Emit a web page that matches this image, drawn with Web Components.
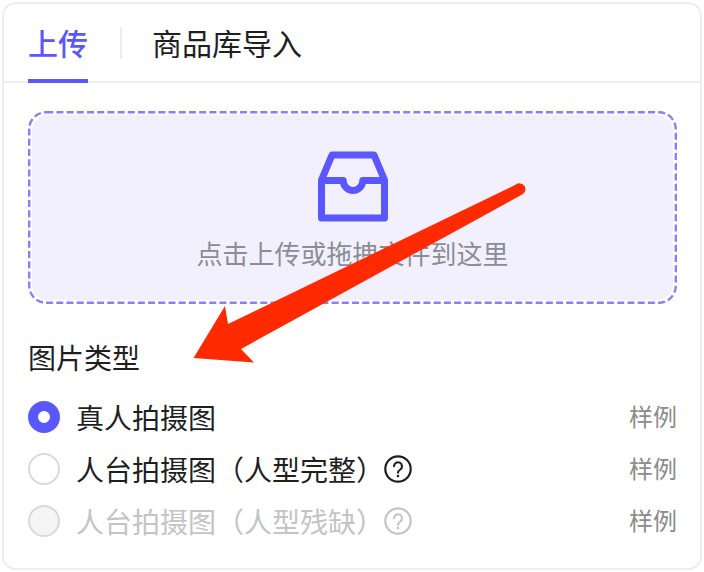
<!DOCTYPE html>
<html lang="zh">
<head>
<meta charset="utf-8">
<style>
  html, body { margin: 0; background: #fff; }
  body { font-family: "Noto Sans CJK SC", "Noto Sans", sans-serif; color: #1f1f1f; }
</style>
</head>
<body>
<upload-card>
  <tab-bar></tab-bar>
  <drop-zone>点击上传或拖拽文件到这里</drop-zone>
  <div slot="label">图片类型</div>
  <type-option checked>真人拍摄图</type-option>
  <type-option help>人台拍摄图（人型完整）</type-option>
  <type-option help disabled>人台拍摄图（人型残缺）</type-option>
</upload-card>
<red-arrow></red-arrow>

<script>
const helpIcon = `
<svg width="28" height="28" viewBox="0 0 28 28" fill="none" stroke="currentColor">
  <circle cx="14" cy="14" r="12.7" stroke-width="2.2"/>
  <path d="M10 11.2a4 4 0 1 1 6.3 3.3c-1.4 1-2.3 1.700-2.300 3.300" stroke-width="2.100" stroke-linecap="round"/>
  <circle cx="14" cy="21" r="1.300" fill="currentColor" stroke="none"/>
</svg>`;

class UploadCard extends HTMLElement {
  constructor() {
    super();
    this.attachShadow({ mode: "open" }).innerHTML = `
    <style>
      :host {
        display: block;
        box-sizing: border-box;
        width: 700px;
        height: 568px;
        margin: 2px;
        border: 2px solid #eeeeee;
        border-radius: 14px;
      }
      .body { padding: 28px 23px 0 24px; }
      ::slotted([slot="label"]) {
        font-size: 28px;
        line-height: 36px;
        margin: 35px 0 16px;
      }
    </style>
    <slot name="tabs"></slot>
    <div class="body">
      <slot name="zone"></slot>
      <slot name="label"></slot>
      <slot></slot>
    </div>`;
    this.querySelector("tab-bar").slot = "tabs";
    this.querySelector("drop-zone").slot = "zone";
  }
}

class TabBar extends HTMLElement {
  constructor() {
    super();
    this.attachShadow({ mode: "open" }).innerHTML = `
    <style>
      :host {
        display: flex;
        align-items: center;
        box-sizing: border-box;
        height: 79px;
        padding-left: 24px;
        border-bottom: 2px solid #eeeeee;
        font-size: 30px;
      }
      .tab { position: relative; line-height: 77px; }
      .active { color: #5b57ff; font-weight: 500; }
      .active::after {
        content: "";
        position: absolute;
        left: 0; right: 0; bottom: -2px;
        height: 4px;
        background: #5b57ff;
      }
      .sep { width: 2px; height: 32px; margin: 0 30px 0 32px; background: #eeeeee; }
    </style>
    <div class="tab active">上传</div>
    <div class="sep"></div>
    <div class="tab">商品库导入</div>`;
  }
}

class DropZone extends HTMLElement {
  constructor() {
    super();
    this.attachShadow({ mode: "open" }).innerHTML = `
    <style>
      :host {
        display: flex;
        position: relative;
        box-sizing: border-box;
        height: 193px;
        padding: 4px;
        color: #8c8c94;
        font-size: 26px;
      }
      .fill {
        flex: 1;
        display: flex;
        flex-direction: column;
        align-items: center;
        border-radius: 16px;
        background: #f2f0ff;
      }
      .dash { position: absolute; left: 0; top: 0; }
      .icon { margin-top: 36px; display: block; color: #5b57ff; }
      .text { margin-top: 12px; line-height: 36px; }
    </style>
    <div class="fill">
      <svg class="icon" width="70" height="72" viewBox="0 0 70 72" fill="none" stroke="currentColor" stroke-width="7" stroke-linejoin="round">
        <path d="M3.500 29 L14 4 H56 L66.500 29 V67 H3.500 Z"/>
        <path d="M3.500 29.500 H25.200 a9.800 10 0 0 0 19.600 0 H66.500"/>
      </svg>
      <div class="text"><slot></slot></div>
    </div>
    <svg class="dash" width="649" height="193" fill="none">
      <rect x="1.200" y="1.200" width="646.600" height="190.600" rx="17" stroke="#8a7eff" stroke-width="2.400" stroke-dasharray="7 3.200"/>
    </svg>`;
  }
}

class TypeOption extends HTMLElement {
  constructor() {
    super();
    const help = this.hasAttribute("help") ? `<span class="help">${helpIcon}</span>` : "";
    this.attachShadow({ mode: "open" }).innerHTML = `
    <style>
      :host {
        display: flex;
        align-items: center;
        height: 52px;
        font-size: 28px;
      }
      .dot {
        box-sizing: border-box;
        width: 32px;
        height: 32px;
        margin-right: 16px;
        border: 2px solid #d9d9d9;
        border-radius: 50%;
        background: #fff;
      }
      :host([checked]) .dot { border: 10px solid #5b57ff; }
      :host([disabled]) .dot { background: #f5f5f5; }
      :host([disabled]) .label, :host([disabled]) .help { color: #c4c4c4; }
      .help { display: flex; color: #1f1f1f; }
      .sample { margin-left: auto; margin-bottom: 3px; font-size: 24px; color: #8c8c8c; }
    </style>
    <div class="dot"></div>
    <div class="label"><slot></slot></div>
    ${help}
    <div class="sample">样例</div>`;
  }
}

class RedArrow extends HTMLElement {
  constructor() {
    super();
    this.attachShadow({ mode: "open" }).innerHTML = `
    <style>
      :host { position: absolute; left: 0; top: 0; pointer-events: none; }
      svg { display: block; }
    </style>
    <svg width="704" height="572" viewBox="0 0 704 572">
      <path fill="#ff2a00" d="M193.500 358 L225 306 L228 324 L516 184.500 A5.500 5.500 0 0 1 523 194 L241 349 L254 362.500 Z"/>
    </svg>`;
  }
}

customElements.define("upload-card", UploadCard);
customElements.define("tab-bar", TabBar);
customElements.define("drop-zone", DropZone);
customElements.define("type-option", TypeOption);
customElements.define("red-arrow", RedArrow);
</script>
</body>
</html>
